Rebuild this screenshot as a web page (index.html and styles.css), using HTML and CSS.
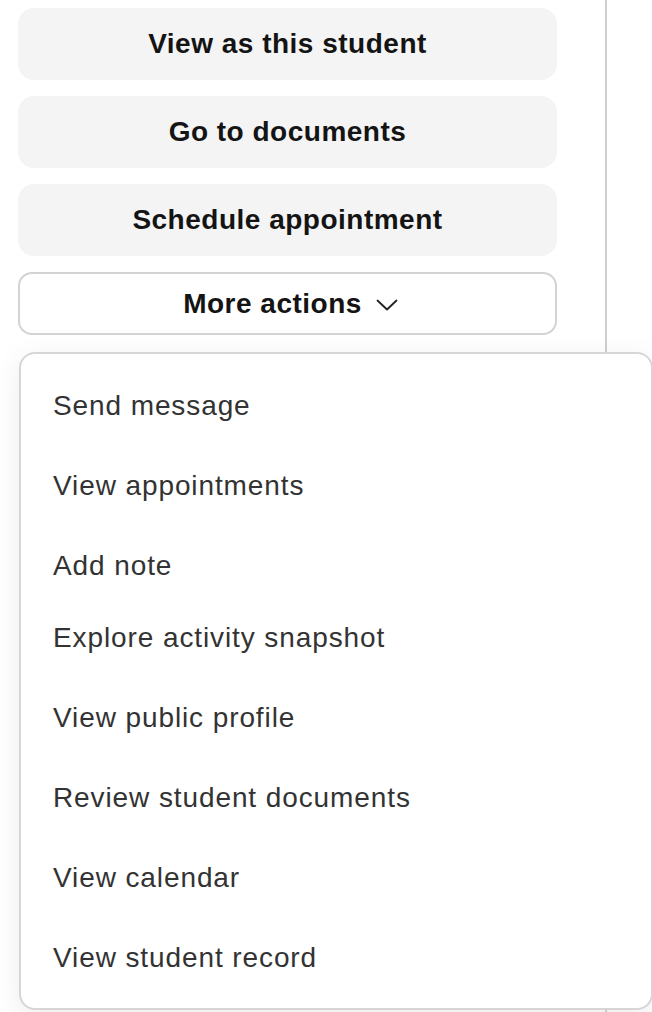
FILE: index.html
```html
<!DOCTYPE html>
<html lang="en">
<head>
    <meta charset="UTF-8">
    <meta name="viewport" content="width=device-width, initial-scale=1.0">
    <title>Student actions</title>
    <link rel="stylesheet" href="styles.css">
</head>
<body>
<div class="page">
    <div class="actions-panel">
        <button class="btn btn-soft" type="button">View as this student</button>
        <button class="btn btn-soft" type="button">Go to documents</button>
        <button class="btn btn-soft" type="button">Schedule appointment</button>
        <button class="btn btn-outline" type="button">
            More actions
            <svg class="chevron" width="22" height="12" viewBox="0 0 22 12" aria-hidden="true">
                <polyline points="1.5,1.5 11,10.5 20.5,1.5" fill="none" stroke="#222" stroke-width="1.8" stroke-linecap="round" stroke-linejoin="round"/>
            </svg>
        </button>
    </div>
    <div class="side-panel"></div>

    <ul class="menu">
        <li class="menu-item">Send message</li>
        <li class="menu-item">View appointments</li>
        <li class="menu-item menu-item-short">Add note</li>
        <li class="menu-item">Explore activity snapshot</li>
        <li class="menu-item">View public profile</li>
        <li class="menu-item">Review student documents</li>
        <li class="menu-item">View calendar</li>
        <li class="menu-item">View student record</li>
    </ul>
</div>
</body>
</html>
```

FILE: styles.css
```css
html, body {
    margin: 0;
    padding: 0;
    background-color: #fff;
    overflow: hidden;
}

body {
    font-family: 'Liberation Sans', Arial, sans-serif;
    width: 652px;
    height: 1012px;
}

.page {
    position: relative;
    display: flex;
    height: 1012px;
}

.actions-panel {
    width: 539px;
    padding: 8px 48px 0 18px;
    display: flex;
    flex-direction: column;
    gap: 16px;
    border-right: 2px solid #cfcfcf;
    height: 1012px;
    box-sizing: content-box;
}

.side-panel {
    flex: 1;
}

.btn {
    font-family: inherit;
    font-size: 28px;
    font-weight: bold;
    letter-spacing: 0.5px;
    color: #141414;
    border-radius: 16px;
    cursor: pointer;
    display: flex;
    align-items: center;
    justify-content: center;
    padding: 0;
}

.btn-soft {
    height: 72px;
    background-color: #f4f4f4;
    border: none;
}

.btn-outline {
    height: 63px;
    background-color: #fff;
    border: 2px solid #d3d3d3;
    border-radius: 14px;
    gap: 14px;
    padding-left: 6px;
}

.chevron {
    margin-top: 2px;
}

.menu {
    position: absolute;
    top: 352px;
    left: 19px;
    width: 630px;
    margin: 0;
    padding: 12px 0 10px;
    list-style: none;
    background-color: #fff;
    border: 2px solid #d6d6d6;
    border-radius: 16px;
    box-shadow: 0 6px 28px rgba(0, 0, 0, 0.08);
}

.menu-item {
    height: 80px;
    line-height: 80px;
    padding-left: 32px;
    font-size: 28px;
    letter-spacing: 0.9px;
    color: #333;
}

.menu-item-short {
    height: 72px;
    line-height: 80px;
}
```
